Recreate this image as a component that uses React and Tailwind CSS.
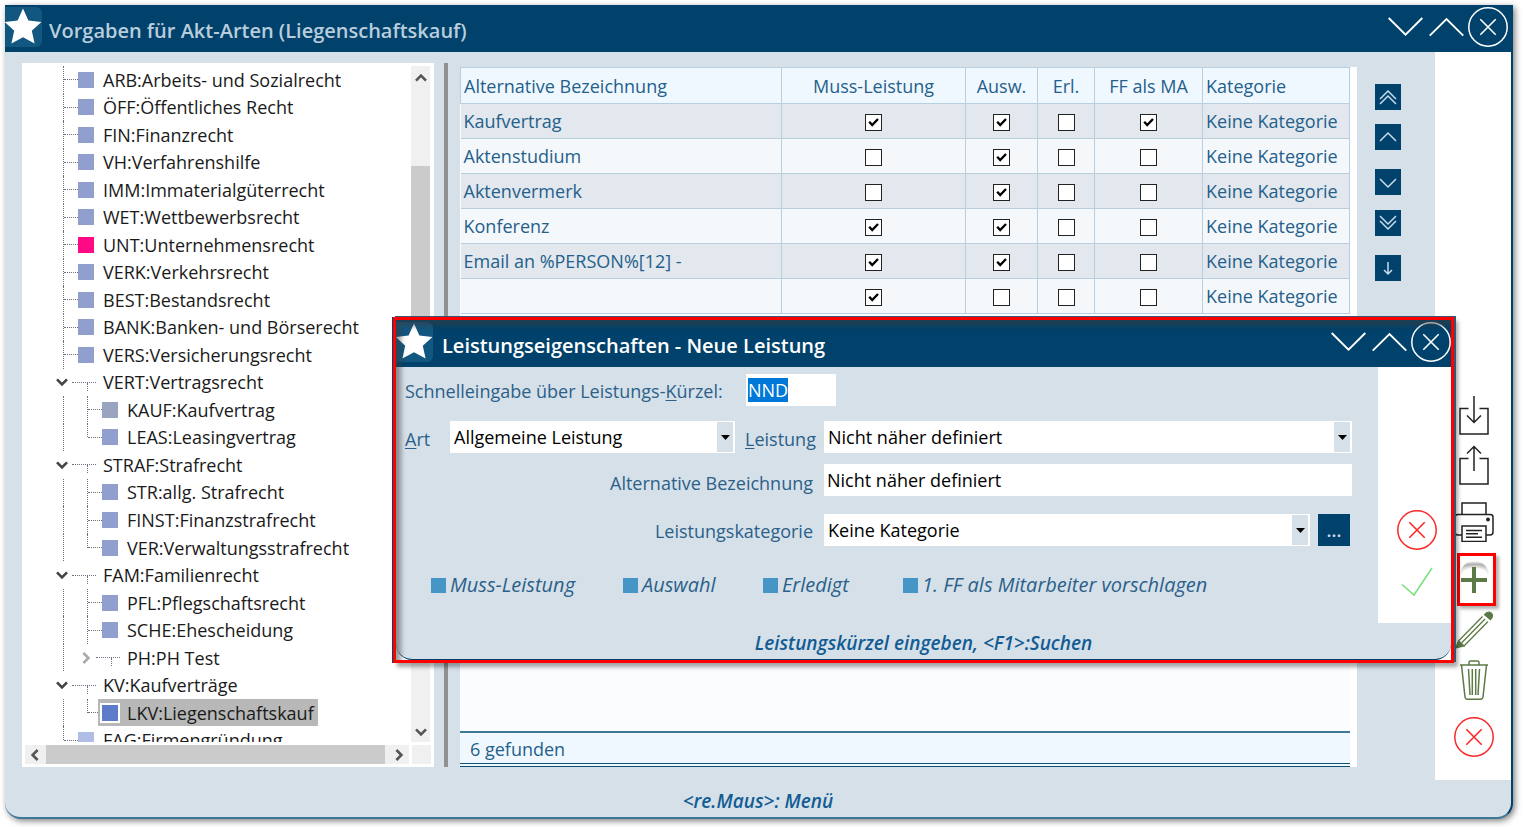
import React, { useEffect, useRef, useState } from 'react';

const treeItems = [
  { label: 'ARB:Arbeits- und Sozialrecht' },
  { label: 'ÖFF:Öffentliches Recht' },
  { label: 'FIN:Finanzrecht' },
  { label: 'VH:Verfahrenshilfe' },
  { label: 'IMM:Immaterialgüterrecht' },
  { label: 'WET:Wettbewerbsrecht' },
  { label: 'UNT:Unternehmensrecht', color: 'bg-[#ff0a84]' },
  { label: 'VERK:Verkehrsrecht' },
  { label: 'BEST:Bestandsrecht' },
  { label: 'BANK:Banken- und Börserecht' },
  { label: 'VERS:Versicherungsrecht' },
  { label: 'VERT:Vertragsrecht', open: true },
  { label: 'KAUF:Kaufvertrag', child: true, color: 'bg-[#9aa4c0]' },
  { label: 'LEAS:Leasingvertrag', child: true, last: true },
  { label: 'STRAF:Strafrecht', open: true },
  { label: 'STR:allg. Strafrecht', child: true },
  { label: 'FINST:Finanzstrafrecht', child: true },
  { label: 'VER:Verwaltungsstrafrecht', child: true, last: true },
  { label: 'FAM:Familienrecht', open: true },
  { label: 'PFL:Pflegschaftsrecht', child: true },
  { label: 'SCHE:Ehescheidung', child: true },
  { label: 'PH:PH Test', child: true, open: false },
  { label: 'KV:Kaufverträge', open: true },
  { label: 'LKV:Liegenschaftskauf', child: true, last: true, selected: true },
  { label: 'FAG:Firmengründung', last: true, color: 'bg-[#b0bee6]' },
];

const initialRows = [
  { name: 'Kaufvertrag', checks: [true, true, false, true] },
  { name: 'Aktenstudium', checks: [false, true, false, false] },
  { name: 'Aktenvermerk', checks: [false, true, false, false] },
  { name: 'Konferenz', checks: [true, true, false, false] },
  { name: 'Email an %PERSON%[12] -', checks: [true, true, false, false] },
  { name: '', checks: [true, false, false, false] },
];

const checkColumns = ['Muss-Leistung', 'Ausw.', 'Erl.', 'FF als MA'];

const StarTile = () => (
  <span className="flex h-10 w-[37px] shrink-0 items-start justify-center rounded-r-md bg-[#125780] pt-px">
    <svg viewBox="0 0 37 36" className="h-9 w-[37px]" fill="#fff">
      <path d="M18 0.6 L23.4 12.6 L36.4 14 L26.8 22.8 L29.6 35.4 L18 29.2 L6.4 35.4 L9.2 22.8 L-0.4 14 L12.6 12.6 Z" />
    </svg>
  </span>
);

const CircleX = ({ className }) => (
  <svg viewBox="0 0 40 40" className={className} fill="none" stroke="currentColor">
    <circle cx="20" cy="20" r="19.2" strokeWidth="1.5" />
    <path d="M12.3 12.3 L27.7 27.7 M27.7 12.3 L12.3 27.7" strokeWidth="1.6" />
  </svg>
);

const WindowButtons = () => (
  <div className="flex items-center text-white">
    <button type="button" aria-label="Minimieren" className="px-[3px]">
      <svg viewBox="0 0 35 20" className="h-5 w-[35px]" fill="none" stroke="currentColor" strokeWidth="1.9">
        <path d="M0.7 1 L17.5 17.6 L34.3 1" />
      </svg>
    </button>
    <button type="button" aria-label="Maximieren" className="pl-[3px] pr-1">
      <svg viewBox="0 0 35 20" className="h-5 w-[35px]" fill="none" stroke="currentColor" strokeWidth="1.9">
        <path d="M0.7 18.6 L17.5 2 L34.3 18.6" />
      </svg>
    </button>
    <button type="button" aria-label="Fenster schließen">
      <CircleX className="size-10" />
    </button>
  </div>
);

const Arrow = ({ d, className }) => (
  <svg viewBox="0 0 12 12" className={className} fill="none" stroke="currentColor" strokeWidth="2.6">
    <path d={d} />
  </svg>
);

const TreeRow = ({ item }) => {
  const isNode = item.open !== undefined;
  const half = item.last ? 'h-1/2 self-start' : 'self-stretch';

  return (
    <li className="flex flex-1 items-center whitespace-nowrap">
      {item.child && <span className="ml-[38px] w-6 shrink-0 self-stretch border-l border-dotted border-gray-500" />}

      {isNode ? (
        <button type="button" aria-label={item.label} className={item.child ? '-ml-[7px] flex items-center' : 'ml-[31px] flex items-center'}>
          {item.open ? (
            <Arrow d="M1 3.4 L6 8.4 L11 3.4" className="size-3 text-[#444]" />
          ) : (
            <Arrow d="M3.4 1 L8.4 6 L3.4 11" className="size-3 text-[#aaa]" />
          )}
          <span className="ml-1 h-px w-6 border-t border-dotted border-gray-500">
            <span className="ml-[15px] block h-2 border-l border-dotted border-gray-500" />
          </span>
        </button>
      ) : (
        <>
          <span className={`flex shrink-0 ${item.child ? '' : 'ml-[38px]'} ${half} w-0 border-l border-dotted border-gray-500`} />
          <span className="w-3.5 shrink-0 border-t border-dotted border-gray-500" />
        </>
      )}

      {isNode ? (
        <span className="ml-[7px]">{item.label}</span>
      ) : item.selected ? (
        <span className="-ml-1 flex h-full items-center bg-[#b8b8b8] pr-1 font-medium">
          <span className="ml-0.5 size-5 border-2 border-white bg-[#5d7bc8]" />
          <span className="ml-[7px]">{item.label}</span>
        </span>
      ) : (
        <>
          <span className={`size-4 shrink-0 ${item.color || 'bg-[#909fcd]'}`} />
          <span className="ml-[9px]">{item.label}</span>
        </>
      )}
    </li>
  );
};

const TreePanel = () => (
  <nav className="flex w-[412px] shrink-0 flex-col bg-white p-[3px] text-[#1a1a1a]">
    <div className="flex min-h-0 flex-1">
      <div className="min-w-0 flex-1 overflow-hidden">
        <ul className="flex h-[688px] flex-col">
          {treeItems.map((item) => (
            <TreeRow key={item.label} item={item} />
          ))}
        </ul>
      </div>
      <div className="mr-px flex w-[19px] flex-col items-center bg-[#f0f0f0] text-[#555]">
        <Arrow d="M1 8.6 L6 3.6 L11 8.6" className="mt-1.5 size-3" />
        <span className="mt-[82px] h-[430px] w-full bg-[#cbcbcb]" />
        <Arrow d="M1 3.4 L6 8.4 L11 3.4" className="mb-1 mt-auto size-3" />
      </div>
    </div>
    <div className="mt-[3px] flex h-[19px] text-[#555]">
      <div className="flex min-w-0 flex-1 items-center bg-[#f0f0f0]">
        <Arrow d="M8.6 1 L3.6 6 L8.6 11" className="ml-1 mr-[5px] size-3 shrink-0" />
        <span className="h-full flex-1 bg-[#cbcbcb]" />
        <Arrow d="M3.4 1 L8.4 6 L3.4 11" className="ml-2 mr-1 size-3 shrink-0" />
      </div>
      <span className="ml-[3px] w-[19px] bg-[#f0f0f0]" />
    </div>
  </nav>
);

const CheckBox = ({ checked, onChange, label }) => (
  <span className="inline-grid align-middle">
    <input
      type="checkbox"
      aria-label={label}
      checked={checked}
      onChange={onChange}
      className="col-start-1 row-start-1 size-[17px] appearance-none border border-[#222] bg-white"
    />
    {checked && (
      <svg viewBox="0 0 17 17" className="pointer-events-none col-start-1 row-start-1 size-[17px]" fill="none" stroke="#000" strokeWidth="2.4">
        <path d="M4.2 7.8 L7.2 11 L13 5" />
      </svg>
    )}
  </span>
);

const ServiceTable = () => {
  const [rows, setRows] = useState(initialRows);

  const toggle = (rowIndex, checkIndex) => {
    setRows(
      rows.map((row, i) =>
        i === rowIndex ? { ...row, checks: row.checks.map((c, j) => (j === checkIndex ? !c : c)) } : row
      )
    );
  };

  return (
    <section className="mt-1 flex min-w-0 flex-1 bg-[#fafcfe] text-[#24608b]">
      <div className="flex min-w-0 flex-1 flex-col">
        <table className="w-full table-fixed border-collapse">
          <colgroup>
            <col />
            <col className="w-[184px]" />
            <col className="w-[72px]" />
            <col className="w-[57px]" />
            <col className="w-[108px]" />
            <col className="w-[147px]" />
          </colgroup>
          <thead>
            <tr className="h-9 bg-[#f0f8ff]">
              <th className="border border-[#b9cfdf] px-[3px] text-left font-normal">Alternative Bezeichnung</th>
              {checkColumns.map((name) => (
                <th key={name} className="whitespace-nowrap border border-[#b9cfdf] text-center font-normal">{name}</th>
              ))}
              <th className="border border-[#b9cfdf] px-[3px] text-left font-normal">Kategorie</th>
            </tr>
          </thead>
          <tbody>
            {rows.map((row, i) => (
              <tr key={i} className="h-[35px] odd:bg-[#e2e8ee] even:bg-[#f5f8fb]">
                <td className="border-b border-[#b9cfdf] px-[3px]">{row.name}</td>
                {row.checks.map((checked, j) => (
                  <td key={j} className="border border-[#b9cfdf] text-center leading-none">
                    <CheckBox checked={checked} onChange={() => toggle(i, j)} label={checkColumns[j]} />
                  </td>
                ))}
                <td className="whitespace-nowrap border border-[#b9cfdf] px-[3px]">Keine Kategorie</td>
              </tr>
            ))}
          </tbody>
        </table>
        <div className="mt-auto border-t-2 border-[#3f7797] bg-[#f0f8ff]">
          <p className="flex h-[30px] items-center px-2.5 pt-0.5">{rows.length} gefunden</p>
          <div className="h-1 border-y border-[#134f75]" />
        </div>
      </div>
      <span className="ml-px w-1.5 bg-white" />
    </section>
  );
};

const MoveButton = ({ label, d, className }) => (
  <button type="button" aria-label={label} className={`flex size-[26px] items-center justify-center bg-[#00426b] text-[#c9dcea] ${className}`}>
    <svg viewBox="0 0 20 20" className="size-5" fill="none" stroke="currentColor" strokeWidth="1.5">
      <path d={d} />
    </svg>
  </button>
);

const MoveButtons = () => (
  <div className="ml-[18px] mr-[34px] mt-[21px] flex flex-col">
    <MoveButton label="Ganz nach oben" d="M2 12 L10 4 L18 12 M2 17 L10 9 L18 17" />
    <MoveButton label="Nach oben" d="M2 14 L10 6 L18 14" className="mt-3.5" />
    <MoveButton label="Nach unten" d="M2 7 L10 15 L18 7" className="mt-[19px]" />
    <MoveButton label="Ganz nach unten" d="M2 3 L10 11 L18 3 M2 8 L10 16 L18 8" className="mt-[15px]" />
    <MoveButton label="Verschieben" d="M10 4 V16 M6 12 L10 16 L14 12" className="mt-[19px] text-[#8fb3cc]" />
  </div>
);

const SideBar = () => (
  <aside className="flex w-[76px] shrink-0 flex-col items-center justify-end bg-white pb-[23px] pl-0.5 text-[#222]">
    <button type="button" aria-label="Importieren">
      <svg viewBox="0 0 40 40" className="size-10" fill="none" stroke="currentColor" strokeWidth="1.5">
        <path d="M14.5 13.5 H6 V39 H34 V13.5 H25.5 M20 1 V27.5 M13 20.5 L20 27.5 L27 20.5" />
      </svg>
    </button>
    <button type="button" aria-label="Exportieren" className="mt-2.5">
      <svg viewBox="0 0 40 40" className="size-10" fill="none" stroke="currentColor" strokeWidth="1.5">
        <path d="M14.5 13.5 H6 V39 H34 V13.5 H25.5 M20 26 V1.5 M13 8.5 L20 1.5 L27 8.5" />
      </svg>
    </button>
    <button type="button" aria-label="Drucken" className="mt-[17px]">
      <svg viewBox="0 0 40 40" className="size-10" fill="none" stroke="currentColor" strokeWidth="1.5">
        <path d="M8 12 V1 H32 V12" />
        <path d="M8 33 H4 Q1 33 1 30 V15 Q1 12.5 4 12.5 H36 Q39 12.5 39 15 V30 Q39 33 36 33 H32" />
        <path d="M8 24 H32 V39.5 H8 Z M12 28.5 H28 M12 31.8 H24 M12 35.2 H28" />
        <circle cx="34" cy="17.5" r="1.2" fill="currentColor" />
      </svg>
    </button>
    <button
      type="button"
      aria-label="Neu"
      className="mr-[15px] mt-[11px] flex h-[53px] w-[39px] items-center justify-start self-end border-3 border-[#f00] shadow-[3px_3px_3px_rgba(0,0,0,0.3)]"
    >
      <svg viewBox="0 0 33 47" className="h-[47px] w-[33px]" fill="none">
        <defs>
          <radialGradient id="glow" cx="0.5" cy="1" r="1" gradientTransform="translate(0 0)">
            <stop offset="0.4" stopColor="#fff" />
            <stop offset="0.75" stopColor="#b0b0b0" />
            <stop offset="1" stopColor="#fff" />
          </radialGradient>
        </defs>
        <path d="M0 18 Q3 5 14 5 Q26 5 29 18 Z" fill="url(#glow)" />
        <path d="M14 11 V37 M1 24 H27" stroke="#5c7a45" strokeWidth="4" />
      </svg>
    </button>
    <button type="button" aria-label="Bearbeiten" className="mt-1 text-[#5c7a45]">
      <svg viewBox="0 0 40 40" className="size-10" fill="none" stroke="currentColor" strokeWidth="1.3">
        <path d="M4.5 31 L28.5 6.5 M10 36 L34 11.5 M7.5 33 L31 9" />
        <path d="M2 37.8 L4.5 31 L10 36 Z" fill="currentColor" />
        <path d="M30.6 4.6 Q33.8 0.6 37.4 3.2 Q40 6 36.4 9.6 Z" fill="currentColor" />
      </svg>
    </button>
    <button type="button" aria-label="Löschen" className="mt-2.5 text-[#5c7a45]">
      <svg viewBox="0 0 40 40" className="size-10" fill="none" stroke="currentColor" strokeWidth="1.5">
        <path d="M6 5 H34 M15 5 V2.5 Q15 1 16.5 1 H23.5 Q25 1 25 2.5 V5" />
        <path d="M7.5 5 L11 37 Q11.3 39.3 13.5 39.3 H26.5 Q28.7 39.3 29 37 L32.5 5" />
        <path d="M14.5 9 L16 35 M18.3 9 V35 M21.7 9 V35 M25.5 9 L24 35" />
      </svg>
    </button>
    <button type="button" aria-label="Abbrechen" className="mt-[17px] text-[#fa2828]">
      <CircleX className="size-10" />
    </button>
  </aside>
);

const SelectBox = ({ id, value }) => (
  <div className="relative min-w-0 flex-1">
    <select id={id} defaultValue={value} className="h-8 w-full appearance-none bg-white pl-1 pr-5 text-black">
      <option>{value}</option>
    </select>
    <span className="pointer-events-none absolute inset-y-px right-0.5 flex w-4 items-center justify-center bg-[#d5e0e9]">
      <svg viewBox="0 0 9 5" className="h-[5px] w-[9px]">
        <path d="M0 0 H9 L4.5 5 Z" fill="#000" />
      </svg>
    </span>
  </div>
);

const OptionBox = ({ label, className }) => (
  <label className={`flex items-center gap-1 whitespace-nowrap text-xl/6 italic ${className}`}>
    <input type="checkbox" className="size-[15px] shrink-0 appearance-none bg-[#4596c7]" />
    {label}
  </label>
);

const ServiceDialog = () => {
  const codeRef = useRef(null);
  const [code, setCode] = useState('NND');

  useEffect(() => {
    codeRef.current.focus();
    codeRef.current.select();
  }, []);

  return (
    <div
      role="dialog"
      aria-label="Leistungseigenschaften"
      className="absolute left-[388px] top-[312px] w-[1061px] bg-white p-[3px] shadow-[2px_-1px_0_#3c5472,-1px_0_0_#00426b,4px_4px_4px_rgba(0,0,0,0.35)]"
    >
      <div className="overflow-hidden rounded-b-2xl border-b border-[#00426b] bg-[#d5e0e9] text-[#2c6089]">
        <header className="flex h-[47px] items-center bg-[#00426b] pb-1">
          <StarTile />
          <h2 className="ml-[9px] flex-1 pt-2 text-xl/6 font-semibold text-white">Leistungseigenschaften - Neue Leistung</h2>
          <WindowButtons />
        </header>
        <div className="flex h-64">
          <form className="min-w-0 flex-1 pl-[9px] pr-[26px] pt-[7px]">
            <div className="flex h-8 items-center">
              <label htmlFor="code" className="w-[341px] pt-0.5">
                Schnelleingabe über Leistungs-<u className="underline-offset-2">K</u>ürzel:
              </label>
              <input
                id="code"
                ref={codeRef}
                value={code}
                onChange={(e) => setCode(e.target.value)}
                className="h-8 w-[90px] bg-white px-0.5 text-black outline-none selection:bg-[#0078d7] selection:text-white"
              />
            </div>
            <div className="mt-[15px] flex items-center">
              <label htmlFor="art" className="w-[45px] pt-1"><u className="underline-offset-2">A</u>rt</label>
              <div className="flex w-[285px]">
                <SelectBox id="art" value="Allgemeine Leistung" />
              </div>
              <label htmlFor="leistung" className="w-[89px] pl-2.5 pt-1"><u className="underline-offset-2">L</u>eistung</label>
              <SelectBox id="leistung" value="Nicht näher definiert" />
            </div>
            <div className="mt-[11px] flex items-center">
              <label htmlFor="bezeichnung" className="w-[419px] pr-[11px] pt-1.5 text-right">Alternative Bezeichnung</label>
              <input
                id="bezeichnung"
                defaultValue="Nicht näher definiert"
                className="h-8 min-w-0 flex-1 bg-white px-[3px] text-black"
              />
            </div>
            <div className="mt-[18px] flex items-center">
              <label htmlFor="kategorie" className="w-[419px] pr-[11px] pt-0.5 text-right">Leistungskategorie</label>
              <SelectBox id="kategorie" value="Keine Kategorie" />
              <button type="button" aria-label="Kategorie wählen" className="ml-2 mr-0.5 size-8 bg-[#00426b] font-semibold text-[#c9dcea]">
                ...
              </button>
            </div>
            <div className="mt-[27px] flex items-center pl-[26px]">
              <OptionBox label="Muss-Leistung" className="w-48" />
              <OptionBox label="Auswahl" className="w-[140px]" />
              <OptionBox label="Erledigt" className="w-[140px]" />
              <OptionBox label="1. FF als Mitarbeiter vorschlagen" />
            </div>
          </form>
          <div className="flex w-[73px] shrink-0 flex-col items-center bg-white pl-1 pt-[143px]">
            <button type="button" aria-label="Abbrechen" className="text-[#fa2828]">
              <CircleX className="size-10" />
            </button>
            <button type="button" aria-label="Übernehmen" className="mt-3 text-[#7ce07c]">
              <svg viewBox="0 0 40 40" className="size-10" fill="none" stroke="currentColor" strokeWidth="1.6">
                <path d="M5 22.5 L17 33 L35 6" />
              </svg>
            </button>
          </div>
        </div>
        <p className="flex h-9 items-center justify-center pt-1 text-[19px] font-semibold italic text-[#135c93]">
          Leistungskürzel eingeben, &lt;F1&gt;:Suchen
        </p>
      </div>
      <div className="pointer-events-none absolute inset-0 border-3 border-[#f00] shadow-[inset_5px_6px_5px_rgba(60,60,60,0.5)]" />
    </div>
  );
};

const App = () => {
  return (
    <div className="h-screen bg-white pb-2 pl-[5px] pr-2.5 pt-[5px] font-['Open_Sans',sans-serif] text-lg/6">
      <div className="relative h-full">
        <div className="flex h-full flex-col overflow-hidden rounded-b-2xl border-b-2 border-r-2 border-b-[#3f7797] border-r-[#00426b] bg-[#d5e0e9] shadow-[2px_2px_6px_rgba(0,0,0,0.5)]">
          <header className="flex h-[47px] shrink-0 items-center bg-[#00426b] pb-1">
            <StarTile />
            <h1 className="ml-[7px] flex-1 pt-2 text-xl/6 font-semibold text-[#b9cddd]">Vorgaben für Akt-Arten (Liegenschaftskauf)</h1>
            <div className="pr-[3px]">
              <WindowButtons />
            </div>
          </header>
          <div className="flex min-h-0 flex-1">
            <div className="flex min-w-0 flex-1 pb-[13px] pl-[17px] pt-[11px]">
              <TreePanel />
              <span className="ml-2.5 mr-3 w-1 shrink-0 bg-[#919191]" />
              <ServiceTable />
              <MoveButtons />
            </div>
            <SideBar />
          </div>
          <p className="flex h-[37px] shrink-0 items-center justify-center pt-1 text-[19px] font-semibold italic text-[#135c93]">
            &lt;re.Maus&gt;: Menü
          </p>
        </div>
        <ServiceDialog />
      </div>
    </div>
  );
};

export default App;
